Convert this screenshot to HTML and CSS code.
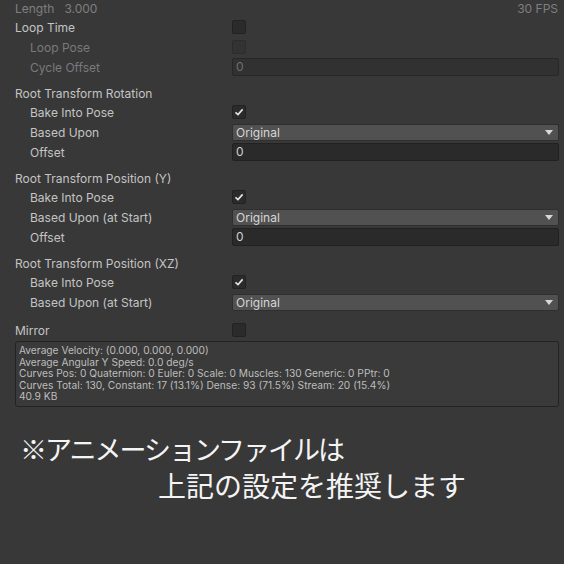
FILE: index.html
```html
<!DOCTYPE html>
<html>
<head>
<meta charset="utf-8">
<link rel="stylesheet" href="styles.css">
</head>
<body>
<div class="panel">
  <div class="row length-row">
    <span class="dim">Length&nbsp;&nbsp;&nbsp;3.000</span>
    <span class="dim fps">30 FPS</span>
  </div>
  <div class="row">
    <div class="label">Loop Time</div>
    <div class="field"><span class="check"></span></div>
  </div>
  <div class="row">
    <div class="label indent disabled">Loop Pose</div>
    <div class="field"><span class="check off"></span></div>
  </div>
  <div class="row">
    <div class="label indent disabled">Cycle Offset</div>
    <div class="field"><div class="input off">0</div></div>
  </div>

  <div class="section">
    <div class="row head"><div class="label">Root Transform Rotation</div></div>
    <div class="row">
      <div class="label indent">Bake Into Pose</div>
      <div class="field"><span class="check on"><svg viewBox="0 0 14 14" width="14" height="14"><path d="M3.5 7.3 L6 9.6 L10.6 4.4" fill="none" stroke="#e6e6e6" stroke-width="1.6"/></svg></span></div>
    </div>
    <div class="row">
      <div class="label indent">Based Upon</div>
      <div class="field"><div class="dropdown">Original<span class="arrow"></span></div></div>
    </div>
    <div class="row">
      <div class="label indent">Offset</div>
      <div class="field"><div class="input">0</div></div>
    </div>
  </div>

  <div class="section">
    <div class="row head"><div class="label">Root Transform Position (Y)</div></div>
    <div class="row">
      <div class="label indent">Bake Into Pose</div>
      <div class="field"><span class="check on"><svg viewBox="0 0 14 14" width="14" height="14"><path d="M3.5 7.3 L6 9.6 L10.6 4.4" fill="none" stroke="#e6e6e6" stroke-width="1.6"/></svg></span></div>
    </div>
    <div class="row">
      <div class="label indent">Based Upon (at Start)</div>
      <div class="field"><div class="dropdown">Original<span class="arrow"></span></div></div>
    </div>
    <div class="row">
      <div class="label indent">Offset</div>
      <div class="field"><div class="input">0</div></div>
    </div>
  </div>

  <div class="section">
    <div class="row head"><div class="label">Root Transform Position (XZ)</div></div>
    <div class="row">
      <div class="label indent">Bake Into Pose</div>
      <div class="field"><span class="check on"><svg viewBox="0 0 14 14" width="14" height="14"><path d="M3.5 7.3 L6 9.6 L10.6 4.4" fill="none" stroke="#e6e6e6" stroke-width="1.6"/></svg></span></div>
    </div>
    <div class="row">
      <div class="label indent">Based Upon (at Start)</div>
      <div class="field"><div class="dropdown">Original<span class="arrow"></span></div></div>
    </div>
  </div>

  <div class="row mirror">
    <div class="label">Mirror</div>
    <div class="field"><span class="check"></span></div>
  </div>

  <div class="info">
    <div>Average Velocity: (0.000, 0.000, 0.000)</div>
    <div>Average Angular Y Speed: 0.0 deg/s</div>
    <div>Curves Pos: 0 Quaternion: 0 Euler: 0 Scale: 0 Muscles: 130 Generic: 0 PPtr: 0</div>
    <div>Curves Total: 130, Constant: 17 (13.1%) Dense: 93 (71.5%) Stream: 20 (15.4%)</div>
    <div>40.9 KB</div>
  </div>

  <div class="note">
    <div class="note1">※アニメーションファイルは</div>
    <div class="note2">上記の設定を推奨します</div>
  </div>
</div>
</body>
</html>
```

FILE: styles.css
```css
html, body {
  margin: 0;
  padding: 0;
  background: #383838;
  height: 100%;
}
body {
  font-family: Inter, "Noto Sans", sans-serif;
  font-size: 12px;
  color: #c4c4c4;
}
.panel {
  padding: 0 5px 0 15px;
}
.row {
  display: flex;
  align-items: center;
  height: 20px;
}
.length-row {
  height: 16px;
  margin-bottom: 1px;
  justify-content: space-between;
}
.dim {
  color: #7f7f7f;
}
.fps {
  margin-right: 1px;
}
.label {
  width: 217px;
  flex: none;
  white-space: nowrap;
}
.label.indent {
  padding-left: 15px;
  box-sizing: border-box;
}
.label.disabled {
  color: #7a7a7a;
}
.field {
  flex: 1;
  display: flex;
  align-items: center;
}
.check {
  width: 14px;
  height: 14px;
  box-sizing: border-box;
  background: #2b2b2b;
  border: 1px solid #222;
  border-radius: 2px;
  display: block;
  position: relative;
}
.check.off {
  background: #333;
  border-color: #2c2c2c;
}
.check.on svg {
  position: absolute;
  left: -1px;
  top: -1px;
}
.input {
  flex: 1;
  height: 18px;
  box-sizing: border-box;
  background: #2a2a2a;
  border: 1px solid #212121;
  border-radius: 2px;
  padding-left: 3px;
  line-height: 16px;
  color: #d2d2d2;
}
.input.off {
  background: #313131;
  border-color: #272727;
  color: #6f6f6f;
}
.dropdown {
  flex: 1;
  height: 17px;
  box-sizing: border-box;
  background: #515151;
  border: 1px solid #2f2f2f;
  border-radius: 2px;
  padding-left: 3px;
  line-height: 15px;
  color: #d6d6d6;
  position: relative;
}
.arrow {
  position: absolute;
  right: 5px;
  top: 5px;
  width: 0;
  height: 0;
  border-left: 4px solid transparent;
  border-right: 4px solid transparent;
  border-top: 5px solid #d8d8d8;
}
.section {
  margin-top: 6px;
}
.row.head {
  height: 19px;
  padding-top: 1px;
  box-sizing: border-box;
}
.mirror {
  margin-top: 8px;
}
.info {
  margin-top: 1px;
  height: 66px;
  box-sizing: border-box;
  border: 1px solid #232323;
  border-radius: 3px;
  background: #3a3a3a;
  padding: 3px 0 0 3px;
  font-size: 10.2px;
  line-height: 11.5px;
  color: #bdbdbd;
}
.note {
  margin-top: 22px;
  color: #f4f4f4;
  font-family: "Noto Sans CJK JP", sans-serif;
  font-weight: 400;
}
.note1 {
  padding-left: 5px;
  font-size: 27px;
  letter-spacing: -2px;
  line-height: 40px;
}
.note2 {
  padding-left: 143px;
  font-size: 28px;
  letter-spacing: 0;
  line-height: 32px;
}
```
